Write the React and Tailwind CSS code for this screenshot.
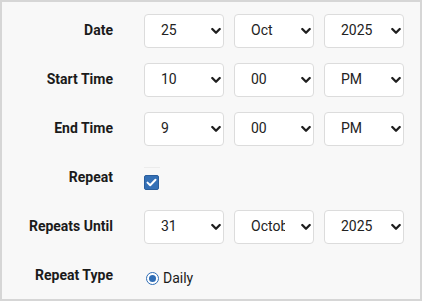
import { useState } from "react";

const days = Array.from({ length: 31 }, (_, i) => String(i + 1));
const hours = Array.from({ length: 12 }, (_, i) => String(i + 1));
const minutes = ["00", "15", "30", "45"];
const shortMonths = ["Jan", "Feb", "Mar", "Apr", "May", "Jun", "Jul", "Aug", "Sep", "Oct", "Nov", "Dec"];
const longMonths = [
  "January", "February", "March", "April", "May", "June",
  "July", "August", "September", "October", "November", "December",
];
const years = ["2024", "2025", "2026"];

function Chevron() {
  return (
    <svg
      className="pointer-events-none absolute right-[3px] top-1/2 -translate-y-1/2"
      width="10"
      height="7"
      viewBox="0 0 10 7"
      fill="none"
    >
      <path d="M1.3 1.5 5 5.2l3.7-3.7" stroke="#1f1f1f" strokeWidth="2.3" strokeLinecap="round" strokeLinejoin="round" />
    </svg>
  );
}

function Select({ value, options, onChange }) {
  return (
    <div className="relative w-[80px]">
      <select
        value={value}
        onChange={(e) => onChange(e.target.value)}
        className="block h-[34px] w-full appearance-none overflow-hidden rounded-[4px] border border-[#dcdcdc] bg-white pl-[16px] pr-[28px] text-[14px] text-[#222] outline-none"
      >
        {options.map((o) => (
          <option key={o} value={o}>
            {o}
          </option>
        ))}
      </select>
      <Chevron />
    </div>
  );
}

function Row({ label, children }) {
  return (
    <div className="flex h-[49px] items-center">
      <div className="w-[111px] text-right text-[14px] font-bold text-[#1b1b1b]">{label}</div>
      <div className="ml-[31px] flex gap-[10px]">{children}</div>
    </div>
  );
}

export default function App() {
  const [form, setForm] = useState({
    day: "25",
    month: "Oct",
    year: "2025",
    startH: "10",
    startM: "00",
    startP: "PM",
    endH: "9",
    endM: "00",
    endP: "PM",
    repeat: true,
    untilDay: "31",
    untilMonth: "October",
    untilYear: "2025",
    type: "daily",
  });
  const set = (k) => (v) => setForm((f) => ({ ...f, [k]: v }));

  return (
    <div
      className="h-[301px] w-[422px] border-2 border-[#d6d6d6] bg-[#f8f8f8] pt-[4px]"
      style={{ fontFamily: "Roboto, 'Liberation Sans', sans-serif" }}
    >
      <Row label="Date">
        <Select value={form.day} options={days} onChange={set("day")} />
        <Select value={form.month} options={shortMonths} onChange={set("month")} />
        <Select value={form.year} options={years} onChange={set("year")} />
      </Row>
      <Row label="Start Time">
        <Select value={form.startH} options={hours} onChange={set("startH")} />
        <Select value={form.startM} options={minutes} onChange={set("startM")} />
        <Select value={form.startP} options={["AM", "PM"]} onChange={set("startP")} />
      </Row>
      <Row label="End Time">
        <Select value={form.endH} options={hours} onChange={set("endH")} />
        <Select value={form.endM} options={minutes} onChange={set("endM")} />
        <Select value={form.endP} options={["AM", "PM"]} onChange={set("endP")} />
      </Row>
      <Row label="Repeat">
        <div className="flex flex-col pt-[2px]">
          <div className="mb-[7px] h-px w-[16px] bg-[#ececec]" />
          <button
            type="button"
            onClick={() => set("repeat")(!form.repeat)}
            className="flex h-[15px] w-[15px] items-center justify-center rounded-[2px] border border-[#2a5e9c] bg-[#3470b6]"
          >
            {form.repeat && (
              <svg width="11" height="9" viewBox="0 0 11 9" fill="none">
                <path d="M1.5 4.6 4.2 7.2 9.5 1.8" stroke="white" strokeWidth="2" strokeLinecap="round" strokeLinejoin="round" />
              </svg>
            )}
          </button>
        </div>
      </Row>
      <Row label="Repeats Until">
        <Select value={form.untilDay} options={days} onChange={set("untilDay")} />
        <Select value={form.untilMonth} options={longMonths} onChange={set("untilMonth")} />
        <Select value={form.untilYear} options={years} onChange={set("untilYear")} />
      </Row>
      <Row label="Repeat Type">
        <label className="flex items-center gap-[4px] pt-[6px] pl-[2px] text-[14px] text-[#1b1b1b]">
          <span className="flex h-[13px] w-[13px] items-center justify-center rounded-full border-[1.5px] border-[#2f6db5] bg-white">
            <span className="h-[7px] w-[7px] rounded-full bg-[#2f6db5]" />
          </span>
          Daily
        </label>
      </Row>
    </div>
  );
}
